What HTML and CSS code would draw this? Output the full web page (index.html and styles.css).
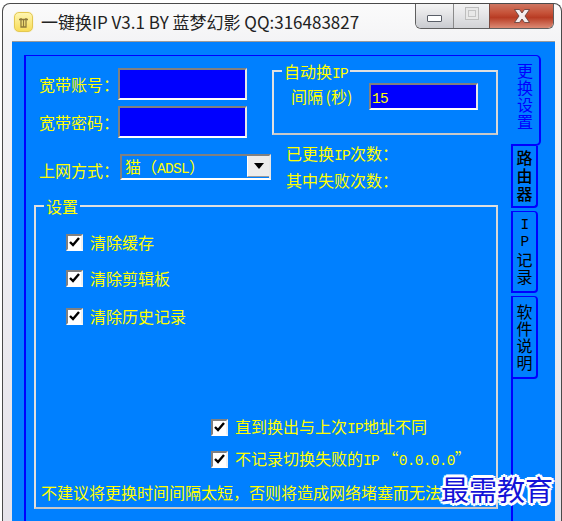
FILE: index.html
```html
<!DOCTYPE html>
<html lang="zh">
<head>
<meta charset="utf-8">
<title>一键换IP</title>
<link rel="stylesheet" href="styles.css">
</head>
<body>
<div class="window">
  <header class="titlebar">
    <span class="app-icon"><svg width="11" height="11" viewBox="0 0 11 11"><path d="M1 2.500h9M3 1v9h5V1M5.500 3v7" fill="none" stroke="#8f7a3a" stroke-width="1.300"/></svg></span>
    <span class="title">一键换IP V3.1 BY 蓝梦幻影 QQ:316483827</span>
    <div class="controls">
      <span class="ctl ctl-min"><i></i></span>
      <span class="ctl ctl-max"><i></i></span>
      <span class="ctl ctl-close">
        <svg width="18" height="14" viewBox="0 0 18 14"><path d="M1.500 .5h5L9 4l2.500-3.500h5L12 7l4.500 6.500h-5L9 10l-2.500 3.500h-5L6 7z" fill="#f4eeee" stroke="#5a3a36" stroke-width=".8"/></svg>
      </span>
    </div>
  </header>
  <div class="client">
    <div class="panel">
      <main class="page">
        <div class="top">
          <div class="creds">
            <label class="field"><span class="field-label">宽带账号&#xFF1A;</span><span class="input input-lg"></span></label>
            <label class="field"><span class="field-label">宽带密码&#xFF1A;</span><span class="input input-lg"></span></label>
          </div>
          <fieldset class="group auto">
            <legend>自动换<span class="lat">IP</span></legend>
            <div class="interval"><span class="interval-label">间隔 (秒)</span><span class="input input-sm"><span class="lat">15</span></span></div>
          </fieldset>
          <div class="mode">
            <span class="mode-label">上网方式&#xFF1A;</span>
            <div class="combo"><span class="combo-text">猫&#xFF08;<span class="lat">ADSL</span>&#xFF09;</span><span class="combo-btn"><svg width="10" height="6" viewBox="0 0 10 6"><path d="M0 0h10L5 6z" fill="#000"/></svg></span></div>
          </div>
          <div class="stats">
            <div>已更换<span class="lat">IP</span>次数&#xFF1A;</div>
            <div>其中失败次数&#xFF1A;</div>
          </div>
        </div>
        <fieldset class="group settings">
          <legend>设置</legend>
          <div class="settings-body">
            <div class="checks">
              <div class="check"><span class="box"><svg width="11" height="10" viewBox="0 0 11 10"><path d="M1 5l3 3 6-7" fill="none" stroke="#000" stroke-width="2.400"/></svg></span><span>清除缓存</span></div>
              <div class="check"><span class="box"><svg width="11" height="10" viewBox="0 0 11 10"><path d="M1 5l3 3 6-7" fill="none" stroke="#000" stroke-width="2.400"/></svg></span><span>清除剪辑板</span></div>
              <div class="check"><span class="box"><svg width="11" height="10" viewBox="0 0 11 10"><path d="M1 5l3 3 6-7" fill="none" stroke="#000" stroke-width="2.400"/></svg></span><span>清除历史记录</span></div>
            </div>
            <div class="checks-right">
              <div class="check"><span class="box"><svg width="11" height="10" viewBox="0 0 11 10"><path d="M1 5l3 3 6-7" fill="none" stroke="#000" stroke-width="2.400"/></svg></span><span>直到换出与上次<span class="lat">IP</span>地址不同</span></div>
              <div class="check"><span class="box"><svg width="11" height="10" viewBox="0 0 11 10"><path d="M1 5l3 3 6-7" fill="none" stroke="#000" stroke-width="2.400"/></svg></span><span>不记录切换失败的<span class="lat">IP</span> “<span class="lat">0.0.0.0</span>”</span></div>
            </div>
            <p class="note">不建议将更换时间间隔太短&#xFF0C;否则将造成网络堵塞而无法换<span class="lat">IP</span></p>
          </div>
        </fieldset>
      </main>
      <nav class="tabs">
        <div class="tab tab-active">更换设置</div>
        <div class="tab tab-router">路由器</div>
        <div class="tab tab-ip"><span class="lat">I</span><span class="lat">P</span>记录</div>
        <div class="tab tab-help">软件说明</div>
        <div class="tab-fill"></div>
      </nav>
    </div>
  </div>
  <div class="watermark">最需教育</div>
</div>
</body>
</html>
```

FILE: styles.css
```css
* { box-sizing: border-box; }
html, body { margin: 0; padding: 0; background: #fff; }
body { width: 562px; height: 521px; overflow: hidden; font-family: "Noto Sans CJK SC", "Liberation Sans", sans-serif; }

.window {
  position: relative;
  width: 560px;
  height: 540px;
  margin: 3px 0 0 2px;
  border: 1px solid #4a4a4a;
  border-bottom: 0;
  border-radius: 8px 8px 0 0;
  background: linear-gradient(#fbfbfb, #f4f4f6 36px, #e6e3ea);
  padding: 0 6px 0 9px;
  overflow: hidden;
}

.titlebar { display: flex; align-items: flex-start; height: 37px; }
.app-icon {
  width: 19px; height: 20px; margin: 8px 0 0 2px;
  border: 1px solid #e4c850; border-radius: 5px;
  background: linear-gradient(#fff6b0, #f8dc58);
  box-shadow: 0 0 1px #f0d870;
  display: flex; align-items: center; justify-content: center;
}
.title { margin: 6px 0 0 8px; font-size: 17px; line-height: 24px; color: #222; white-space: nowrap; flex: 1; }
.controls { display: flex; height: 26px; margin: -1px 1px 0 0; border: 1px solid #5f5f5f; border-top: 0; border-radius: 0 0 6px 6px; overflow: hidden; }
.ctl { display: flex; align-items: center; justify-content: center; height: 25px; }
.ctl-min { width: 38px; background: linear-gradient(#f6f6f6, #e4e4e6 45%, #c9cbd0); border-right: 1px solid #8a8a8a; }
.ctl-min i { width: 15px; height: 7px; border: 1px solid #5a5f68; border-radius: 1px; background: #fff; margin-top: 5px; }
.ctl-max { width: 36px; background: linear-gradient(#f4f4f4, #e6e6e8 45%, #d2d3d6); border-right: 1px solid #7a4a40; }
.ctl-max i { width: 14px; height: 13px; border: 1px solid #bdbdbd; background: #e8e8e8; box-shadow: inset 0 0 0 2px #e8e8e8, inset 0 0 0 3px #c4c4c4; margin-top: -4px; }
.ctl-close { width: 63px; background: linear-gradient(#cf7a66, #c65238 40%, #b83c24 58%, #dc8a74); }

.client { height: 500px; background: #0080ff; border-top: 1px solid #9a9a9a; padding: 13px 12px 0; }
.panel { display: flex; height: 100%; }

.page {
  width: 487px;
  height: 490px;
  border-top: 1px solid #0000ff;
  border-left: 2px solid #0000ff;
  color: #ffff00;
  font-size: 16px;
}
.lat { font-family: "Liberation Mono", monospace; font-size: 14.5px; letter-spacing: -.7px; line-height: 1; }

.top {
  display: grid;
  grid-template-columns: 246px 226px;
  grid-template-rows: 73px 54px;
  padding-top: 12px;
}
.creds { display: flex; flex-direction: column; gap: 6px; padding-left: 13px; }
.field { display: flex; align-items: center; height: 32px; }
.field-label { flex: none; width: 79px; line-height: 20px; white-space: nowrap; }

.input {
  display: block;
  background: #0000ff;
  border: 2px solid;
  border-color: #808080 #e8e8e8 #ffffff #808080;
}
.input-lg { width: 129px; height: 32px; }
.input-sm { width: 109px; height: 27px; padding-left: 1px; line-height: 23px; color: #ffff00; }

.group { margin: 0; min-width: 0; border: 2px solid; border-color: #e0e0e0 #d8d8d8 #c8c8c8 #e0e0e0; }
.group legend { line-height: 20px; padding: 0 2px; margin-left: 8px; }
.auto { height: 74px; margin-top: -7px; padding: 0; }
.interval { display: flex; align-items: center; gap: 13px; padding: 0 0 0 17px; margin-top: 1px; }
.interval-label { width: 65px; white-space: nowrap; word-spacing: -1px; }

.mode { display: flex; align-items: center; height: 26px; margin-top: 13px; padding-left: 13px; }
.mode-label { flex: none; width: 81px; margin-top: 6px; white-space: nowrap; }
.combo {
  width: 151px; height: 26px;
  display: flex; justify-content: space-between;
  border: 2px solid;
  border-color: #808080 #e8e8e8 #ffffff #808080;
}
.combo-text { padding-left: 3px; line-height: 21px; white-space: nowrap; }
.combo-btn {
  width: 22px; height: 21px;
  display: flex; align-items: center; justify-content: center;
  background: #ececec;
  border-left: 1px solid #fff;
  border-bottom: 1px solid #9a9a9a;
}
.stats { padding-left: 14px; margin-top: -1px; line-height: 27px; white-space: nowrap; }

.settings {
  width: 464px;
  height: 313px;
  margin: 1px 0 0 8px;
  padding: 0;
}
.settings legend { margin-left: 8px; }
.settings-body { display: flex; flex-direction: column; padding: 17px 0 0 30px; }
.checks { display: flex; flex-direction: column; }
.check { display: flex; align-items: center; height: 18px; line-height: 18px; white-space: nowrap; }
.checks .check + .check { margin-top: 18px; }
.checks .check:last-child { margin-top: 20px; }
.box {
  width: 17px; height: 17px; margin-right: 7px; flex: none;
  display: flex; align-items: center; justify-content: center;
  background: #fff;
  border: 2px solid;
  border-color: #808080 #f0f0f0 #fff #808080;
}
.checks .box { margin-right: 7px; }
.checks-right { display: flex; flex-direction: column; gap: 14px; margin: 93px 0 0 145px; }
.note { margin: 14px 0 0 -25px; white-space: nowrap; line-height: 20px; }

.tabs { display: flex; flex-direction: column; width: 30px; height: 490px; font-size: 16px; line-height: 17px; color: #000; text-align: center; }
.tab { word-break: break-all; width: 27px; border: 2px solid #0000ff; border-top-width: 1px; border-radius: 0 0 4px 0; }
.tab-active { width: 30px; height: 91px; border-left: 0; border-radius: 0 5px 5px 0; color: #0000ff; padding: 6px 0 0 0; }
.tab-router { height: 62px; line-height: 18px; font-weight: 500; padding-top: 2px; border-top: 0; }
.tab-ip { height: 82px; margin-top: 3px; padding-top: 5px; border-radius: 0 4px 4px 0; }
.tab-ip .lat { display: block; line-height: 17px; }
.tab-help { height: 83px; margin-top: 3px; padding-top: 6px; border-radius: 0 4px 4px 0; }
.tab-fill { flex: 1; border-left: 2px solid #0000ff; }

.watermark {
  position: absolute;
  left: 438px;
  top: 468px;
  font-size: 28px;
  line-height: 34px;
  color: #1212d8;
  white-space: nowrap;
  text-shadow: 3px 0 0 #fff, -3px 0 0 #fff, 0 3px 0 #fff, 0 -3px 0 #fff, 2px 2px 0 #fff, -2px -2px 0 #fff, 2px -2px 0 #fff, -2px 2px 0 #fff;
}
```
